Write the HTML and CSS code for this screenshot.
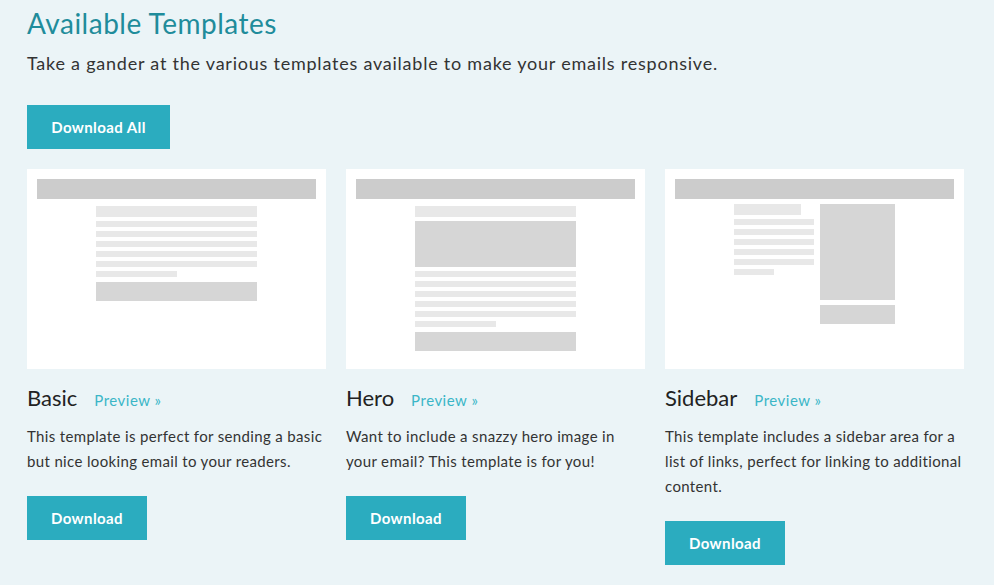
FILE: index.html
```html
<!DOCTYPE html>
<html lang="en">
<head>
<meta charset="utf-8">
<title>Available Templates</title>
<link rel="stylesheet" href="styles.css">
</head>
<body>
<main class="page">
  <h1 class="title">Available Templates</h1>
  <p class="lead">Take a gander at the various templates available to make your emails responsive.</p>
  <a class="btn btn-all" href="#">Download All</a>

  <section class="grid">
    <article class="card">
      <div class="thumb">
        <div class="thumb-head"></div>
        <div class="col basic">
          <div class="t-title"></div>
          <div class="t-line"></div>
          <div class="t-line"></div>
          <div class="t-line"></div>
          <div class="t-line"></div>
          <div class="t-line"></div>
          <div class="t-line short"></div>
          <div class="t-block"></div>
        </div>
      </div>
      <div class="card-head">
        <h2 class="card-title">Basic</h2>
        <a class="preview" href="#">Preview »</a>
      </div>
      <p class="desc">This template is perfect for sending a basic but nice looking email to your readers.</p>
      <a class="btn btn-dl" href="#">Download</a>
    </article>

    <article class="card">
      <div class="thumb">
        <div class="thumb-head"></div>
        <div class="col hero">
          <div class="t-title"></div>
          <div class="t-hero"></div>
          <div class="t-line"></div>
          <div class="t-line"></div>
          <div class="t-line"></div>
          <div class="t-line"></div>
          <div class="t-line"></div>
          <div class="t-line short"></div>
          <div class="t-block"></div>
        </div>
      </div>
      <div class="card-head">
        <h2 class="card-title">Hero</h2>
        <a class="preview" href="#">Preview »</a>
      </div>
      <p class="desc">Want to include a snazzy hero image in your email? This template is for you!</p>
      <a class="btn btn-dl" href="#">Download</a>
    </article>

    <article class="card">
      <div class="thumb">
        <div class="thumb-head"></div>
        <div class="sb-wrap">
          <div class="sb-main">
            <div class="t-title sb-title"></div>
            <div class="t-line"></div>
            <div class="t-line"></div>
            <div class="t-line"></div>
            <div class="t-line"></div>
            <div class="t-line"></div>
            <div class="t-line sb-short"></div>
          </div>
          <div class="sb-side">
            <div class="sb-tall"></div>
            <div class="sb-block"></div>
          </div>
        </div>
      </div>
      <div class="card-head">
        <h2 class="card-title">Sidebar</h2>
        <a class="preview" href="#">Preview »</a>
      </div>
      <p class="desc">This template includes a sidebar area for a list of links, perfect for linking to additional content.</p>
      <a class="btn btn-dl" href="#">Download</a>
    </article>
  </section>
</main>
</body>
</html>
```

FILE: styles.css
```css
* { box-sizing: border-box; }
html, body { margin: 0; padding: 0; }
body {
  background: #ebf4f7;
  font-family: "Lato", "Liberation Sans", sans-serif;
  color: #333;
  width: 994px;
  height: 585px;
  overflow: hidden;
}
.page {
  padding: 0 30px 0 27px;
}
.title {
  margin: 0;
  padding-top: 5px;
  font-size: 28px;
  line-height: 36px;
  font-weight: 400;
  letter-spacing: 0.5px;
  color: #1f8c9b;
}
.lead {
  margin: 10px 0 0;
  font-size: 18px;
  line-height: 24px;
  letter-spacing: 0.77px;
  color: #333;
}
.btn {
  display: inline-flex;
  align-items: center;
  justify-content: center;
  height: 44px;
  background: #2bacbf;
  color: #fff;
  font-weight: 700;
  font-size: 15px;
  letter-spacing: 0.4px;
  text-decoration: none;
}
.btn-all {
  width: 143px;
  margin-top: 30px;
}
.grid {
  display: grid;
  grid-template-columns: repeat(3, 299px);
  column-gap: 20px;
  margin-top: 20px;
  align-items: start;
}
.card { display: flex; flex-direction: column; align-items: flex-start; }
.thumb {
  width: 299px;
  height: 200px;
  background: #fff;
  padding: 10px;
}
.thumb-head {
  height: 20px;
  background: #cccccc;
}
.col {
  width: 161px;
  margin: 7px auto 0;
  display: flex;
  flex-direction: column;
}
.basic { margin-left: 59px; }
.hero { margin-left: 59px; }
.t-title { height: 11px; background: #e8e8e8; margin-bottom: 4px; }
.t-line { height: 6px; background: #e8e8e8; margin-bottom: 4px; }
.t-line.short { width: 81px; }
.t-block { height: 19px; background: #d6d6d6; margin-top: 1px; }
.t-hero { height: 46px; background: #d6d6d6; margin-bottom: 4px; }
.sb-wrap {
  display: flex;
  gap: 6px;
  margin: 5px 0 0 59px;
}
.sb-main { width: 80px; display: flex; flex-direction: column; }
.sb-title { width: 67px; }
.sb-short { width: 40px; }
.sb-side { width: 75px; display: flex; flex-direction: column; gap: 5px; }
.sb-tall { height: 96px; background: #d6d6d6; }
.sb-block { height: 19px; background: #d6d6d6; }
.card-head {
  display: flex;
  align-items: baseline;
  gap: 17px;
  margin-top: 15px;
}
.card-title {
  margin: 0;
  font-size: 22px;
  line-height: 28px;
  font-weight: 400;
  color: #222;
}
.preview {
  font-size: 15px;
  letter-spacing: 0.5px;
  color: #3ab6c7;
  text-decoration: none;
}
.desc {
  width: 299px;
  margin: 12px 0 0;
  font-size: 15px;
  line-height: 25px;
  letter-spacing: 0.35px;
  color: #333;
}
.btn-dl {
  width: 120px;
  margin-top: 22px;
}
```
